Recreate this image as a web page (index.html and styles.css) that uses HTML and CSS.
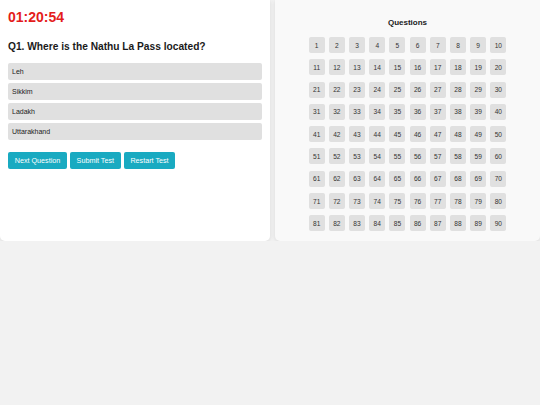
FILE: index.html
```html
<!DOCTYPE html>
<html lang="en">
<head>
    <meta charset="UTF-8">
    <meta name="viewport" content="width=device-width, initial-scale=1.0">
    <title>Quiz Test</title>
    <link rel="stylesheet" href="styles.css">
</head>
<body>
    <div class="container">
        <div class="quiz">
            <div class="timer" id="timer">01:20:54</div>
            <h2 class="question" id="question">Q1. Where is the Nathu La Pass located?</h2>
            <div class="options" id="options">
                <div class="option">Leh</div>
                <div class="option">Sikkim</div>
                <div class="option">Ladakh</div>
                <div class="option">Uttarakhand</div>
            </div>
            <div class="actions">
                <button class="btn">Next Question</button>
                <button class="btn">Submit Test</button>
                <button class="btn">Restart Test</button>
            </div>
        </div>
        <div class="palette">
            <h3>Questions</h3>
            <div class="grid" id="grid"></div>
        </div>
    </div>

    <script>
        let grid = document.getElementById('grid');
        for (let i = 1; i <= 90; i++) {
            let b = document.createElement('button');
            b.className = 'num';
            b.textContent = i;
            grid.appendChild(b);
        }
    </script>
</body>
</html>
```

FILE: styles.css
```css
body {
    margin: 0;
    background-color: #f2f2f2;
    font-family: "Liberation Sans", Arial, sans-serif;
}

.container {
    display: flex;
    gap: 5px;
    align-items: stretch;
}

.quiz {
    width: 270px;
    box-sizing: border-box;
    background-color: #ffffff;
    padding: 8px;
    border-radius: 0 0 5px 5px;
    box-shadow: 0 1px 4px rgba(0, 0, 0, 0.1);
}

.timer {
    color: #e41c1c;
    font-size: 14px;
    font-weight: bold;
    line-height: 18px;
}

.question {
    margin: 14px 0 10px;
    font-size: 10.2px;
    line-height: 13px;
    color: #1a1a1a;
}

.options {
    display: flex;
    flex-direction: column;
    gap: 3px;
}

.option {
    background-color: #e0e0e0;
    height: 17px;
    line-height: 17px;
    padding: 0 4px;
    font-size: 7px;
    color: #222;
    border-radius: 2px;
}

.actions {
    display: flex;
    gap: 3px;
    margin-top: 12px;
}

.btn {
    height: 17px;
    padding: 0 6.7px;
    background-color: #19aac1;
    color: #fff;
    border: none;
    border-radius: 2px;
    font-family: inherit;
    font-size: 7.2px;
    cursor: pointer;
}

.palette {
    flex: 1;
    background-color: #f9f9f9;
    border-radius: 0 0 5px 5px;
    box-shadow: 0 1px 4px rgba(0, 0, 0, 0.1);
    padding: 18px 0 10px;
}

.palette h3 {
    margin: 0 0 9px;
    text-align: center;
    font-size: 8px;
    line-height: 10px;
    color: #1a1a1a;
}

.grid {
    display: grid;
    grid-template-columns: repeat(10, 16px);
    column-gap: 4.2px;
    row-gap: 6.3px;
    justify-content: center;
}

.num {
    width: 16px;
    height: 16px;
    padding: 0;
    background-color: #e0e0e0;
    border: none;
    border-radius: 2px;
    font-family: inherit;
    font-size: 6.6px;
    color: #333;
}
```
